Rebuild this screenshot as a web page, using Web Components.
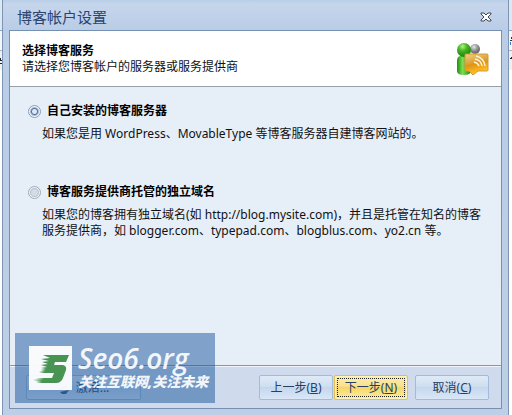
<!DOCTYPE html>
<html lang="zh-CN">
<head>
<meta charset="utf-8">
<title>博客帐户设置</title>
<style>
  body {
    margin: 0;
    font: 12px/16px "Noto Sans", "Noto Sans CJK SC", sans-serif;
    color: #111;
  }
</style>
</head>
<body>
<blog-wizard>
  <wizard-dialog heading="博客帐户设置">
    <wizard-header slot="header">
      <span slot="title">选择博客服务</span>
      请选择您博客帐户的服务器或服务提供商
      <blog-icon slot="icon"></blog-icon>
    </wizard-header>
    <service-option value="self" checked>
      <span slot="label">自己安装的博客服务器</span>
      如果您是用 WordPress、MovableType 等博客服务器自建博客网站的。
    </service-option>
    <service-option value="hosted">
      <span slot="label">博客服务提供商托管的独立域名</span>
      如果您的博客拥有独立域名(如 http://blog.mysite.com)，并且是托管在知名的博客服务提供商，如 blogger.com、typepad.com、blogblus.com、yo2.cn 等。
    </service-option>
    <wizard-button slot="start" wide>
      <svg slot="icon" width="12" height="14" viewBox="0 0 12 14" aria-hidden="true">
        <path d="M2 2l8-2 1 4-7 2z" fill="#a9c2b4"/>
        <path d="M1 6l8-1-1 3-6 1z" fill="#5f8f7c"/>
        <path d="M2 11l9-2-3 4H4z" fill="#3f5878"/>
      </svg>
      激活...
    </wizard-button>
    <wizard-button slot="actions">上一步(<u>B</u>)</wizard-button>
    <wizard-button slot="actions" primary>下一步(<u>N</u>)</wizard-button>
    <wizard-button slot="actions" apart>取消(<u>C</u>)</wizard-button>
  </wizard-dialog>
  <site-watermark slot="overlay">
    <span slot="name">Seo6.org</span>
    关注互联网,关注未来
  </site-watermark>
</blog-wizard>

<script>
function define(name, html, setup) {
  const template = document.createElement("template");
  template.innerHTML = html;
  customElements.define(name, class extends HTMLElement {
    constructor() {
      super();
      this.attachShadow({ mode: "open" });
      this.shadowRoot.appendChild(template.content.cloneNode(true));
    }

    connectedCallback() {
      if (setup) setup(this, this.shadowRoot);
    }
  });
}

// the window behind the dialog shows as a thin strip on both sides
define("blog-wizard", `
  <style>
    :host {
      display: flex;
      position: relative;
      box-sizing: border-box;
      min-height: 100vh;
      padding: 0 3px 0 2px;
      background: linear-gradient(#dce8f6 30px, #8fa4bd 30px, #8fa4bd 31px, #f4f7fb 31px,
        #f4f7fb 50px, #a9b4c0 50px, #a9b4c0 51px, #eff0f2 51px, #eff0f2 70px, #fff 70px);
    }
    .strip { position: absolute; top: 30px; }
    .left { left: 0; }
    .right { right: 0; }
    slot[name=overlay] { display: block; position: absolute; left: 15px; bottom: 12px; }
  </style>
  <svg class="strip left" width="2" height="40" aria-hidden="true">
    <path d="M0 28h1v2h1v1H0zM0 33h2v1H0z" fill="#222"/>
  </svg>
  <svg class="strip right" width="2" height="40" aria-hidden="true">
    <path d="M1 7h1v2H1zM0 10h2v1H0z" fill="#333"/>
    <path d="M0 12h1v3H0z" fill="#2f7ac0"/>
    <path d="M0 28h1v-1h1v2H0z" fill="#222"/>
  </svg>
  <slot></slot>
  <slot name="overlay"></slot>
`);

define("wizard-dialog", `
  <style>
    :host {
      display: flex;
      flex: 1;
      flex-direction: column;
      min-width: 0;
      padding: 0 6px 6px;
      border: solid #7e94b3;
      border-width: 0 1px;
      background: linear-gradient(#b9cee8, #c5d6ec 4px, #bacde6 30px, #bdcfe6);
    }
    .bar {
      display: flex;
      align-items: center;
      justify-content: space-between;
      height: 30px;
      padding: 3px 10px 0 8px;
      box-sizing: border-box;
    }
    h1 { margin: 0; font-size: 15px; line-height: 24px; font-weight: 400; color: #2b4471; }
    .close { display: flex; margin: 0; padding: 0; border: 0; background: none; }
    .panel {
      display: flex;
      flex: 1;
      flex-direction: column;
      border: 1px solid #7590b3;
      background: #e6eef8;
    }
    main { flex: 1; padding: 16px 15px 0 18px; }
    footer {
      display: flex;
      align-items: center;
      justify-content: space-between;
      padding: 9px 12px 8px 16px;
      border-top: 1px solid #8796ac;
      box-shadow: inset 0 1px #f1f5fb;
      background: #cfdbed;
    }
    .actions { display: flex; gap: 1px; }
  </style>
  <div class="bar">
    <h1></h1>
    <button class="close" aria-label="关闭">
      <svg width="12" height="12" viewBox="0 0 12 12">
        <path d="M1 2h3l2 2 2-2h3v1L8 6l3 3v1H8L6 8l-2 2H1V9l3-3-3-3z" fill="#fff" stroke="#3c4657"/>
      </svg>
    </button>
  </div>
  <div class="panel">
    <slot name="header"></slot>
    <main><slot></slot></main>
    <footer>
      <slot name="start"></slot>
      <div class="actions"><slot name="actions"></slot></div>
    </footer>
  </div>
`, (host, root) => {
  root.querySelector("h1").textContent = host.getAttribute("heading");
});

define("wizard-header", `
  <style>
    :host {
      display: flex;
      justify-content: space-between;
      align-items: center;
      height: 55px;
      padding: 0 11px 0 12px;
      border-bottom: 1px solid #9a9fa8;
      background: #fff;
    }
    h2 { margin: 0; font-size: 12px; line-height: 16px; font-weight: 700; color: #000; }
    p { margin: 0; }
  </style>
  <div>
    <h2><slot name="title"></slot></h2>
    <p><slot></slot></p>
  </div>
  <slot name="icon"></slot>
`);

define("blog-icon", `
  <style>
    :host { display: block; }
    svg { display: block; }
  </style>
  <svg width="34" height="34" viewBox="0 0 34 34" aria-hidden="true">
    <defs>
      <radialGradient id="green" cx=".4" cy=".25" r=".8">
        <stop offset="0" stop-color="#b4ee8c"/>
        <stop offset=".4" stop-color="#46b51f"/>
        <stop offset="1" stop-color="#147a0b"/>
      </radialGradient>
      <linearGradient id="torso" x2="1">
        <stop offset="0" stop-color="#1f8d10"/>
        <stop offset=".4" stop-color="#7be04f"/>
        <stop offset="1" stop-color="#178a0c"/>
      </linearGradient>
      <radialGradient id="grey" cx=".4" cy=".3" r=".8">
        <stop offset="0" stop-color="#e6e6e6"/>
        <stop offset=".5" stop-color="#8b8b8b"/>
        <stop offset="1" stop-color="#505050"/>
      </radialGradient>
      <linearGradient id="gold" x2=".3" y2="1">
        <stop offset="0" stop-color="#f4cf83"/>
        <stop offset=".45" stop-color="#dda339"/>
        <stop offset=".55" stop-color="#e29312"/>
        <stop offset="1" stop-color="#ffc52b"/>
      </linearGradient>
    </defs>
    <circle cx="19" cy="7" r="5" fill="url(#grey)"/>
    <path d="M1 19q0-5 4-5h6q4 0 4 5v10q0 4-7 4t-7-4z" fill="url(#torso)"/>
    <circle cx="8" cy="8" r="7" fill="url(#green)"/>
    <path d="M10 12h21q1 0 1 1v15q0 1-1 1h-9l-5 4-4-4h-3q-1 0-1-1V13q0-1 1-1z" fill="url(#gold)" stroke="#d39a3a"/>
    <g fill="none" stroke="#fff3d8" stroke-width="1.5">
      <path d="M18 20q4 1 5 4"/>
      <path d="M19 17q6 1 7 7"/>
      <path d="M20 14q8 2 9 10"/>
    </g>
  </svg>
`);

define("service-option", `
  <style>
    :host { display: block; margin-bottom: 42px; }
    label { display: flex; align-items: center; gap: 6px; font-weight: 700; color: #000; }
    input {
      appearance: none;
      flex: none;
      width: 13px;
      height: 13px;
      margin: 0;
      border: 1px solid #9ba9bb;
      border-radius: 50%;
      background: radial-gradient(#d5dbe3 3px, #b6bfcc 4px, #eff4fa 5px);
    }
    input:checked {
      border-color: #869fc1;
      background: radial-gradient(#dfe9f3 2px, #567399 3px, #a9bdd7 4px, #eff4fa 5px);
    }
    p { margin: 7px 0 0 14px; }
  </style>
  <label><input type="radio" name="service"><slot name="label"></slot></label>
  <p><slot></slot></p>
`, (host, root) => {
  const input = root.querySelector("input");
  input.value = host.getAttribute("value");
  input.checked = host.hasAttribute("checked");
  // shadow roots split the radio group, so clear the siblings by hand
  input.addEventListener("change", () => {
    for (const other of host.parentNode.querySelectorAll("service-option")) {
      if (other !== host) other.shadowRoot.querySelector("input").checked = false;
    }
  });
});

define("wizard-button", `
  <style>
    :host { display: block; }
    :host([apart]) { margin-left: 6px; }
    button {
      display: flex;
      align-items: center;
      justify-content: center;
      gap: 6px;
      width: 74px;
      height: 25px;
      padding: 1px;
      border: 1px solid #a3bbd9;
      border-radius: 2px;
      background: linear-gradient(#dfeaf7, #cfdff1 45%, #c5d7ee 50%, #d9e7f7);
      font: inherit;
      color: #26405f;
    }
    :host([wide]) button { width: 115px; }
    :host([primary]) button {
      border-color: #e3bd55;
      box-shadow: inset 0 0 0 1px #fff3b4;
      background: linear-gradient(#fdedb0, #fbe08c 45%, #f7d567 50%, #fdf09f);
    }
    :host([primary]) .face { outline: 1px dotted #222; }
    .face { width: 66px; line-height: 17px; white-space: nowrap; }
    :host([wide]) .face { width: auto; }
  </style>
  <button type="button"><slot name="icon"></slot><span class="face"><slot></slot></span></button>
`);

define("site-watermark", `
  <style>
    :host {
      display: flex;
      align-items: center;
      gap: 6px;
      box-sizing: border-box;
      width: 200px;
      height: 70px;
      padding-left: 14px;
      background: rgba(26, 86, 155, .5);
      color: rgba(255, 255, 255, .92);
      font-style: italic;
      white-space: nowrap;
    }
    svg { flex: none; }
    .name { font: italic 600 28px/28px "Open Sans", sans-serif; }
    .motto { font-size: 14px; line-height: 20px; font-weight: 900; }
  </style>
  <svg width="43" height="44" viewBox="0 0 43 44" aria-hidden="true">
    <path d="M0 0h43v44H0z" fill="#fff" fill-opacity=".94"/>
    <path d="M14 9h26l-3 7H26l-1 3h9q4 1 3 5l-3 8q-2 5-7 5H13l-6-1 6-1-9-1 11-1-8-1h16l2-5H15l-5-1 6-1-4-1 5-1-5-1 6-1-6-2 7-1-6-2 7-1-8-2 9-1z" fill="#489452"/>
  </svg>
  <div>
    <div class="name"><slot name="name"></slot></div>
    <div class="motto"><slot></slot></div>
  </div>
`);
</script>
</body>
</html>
